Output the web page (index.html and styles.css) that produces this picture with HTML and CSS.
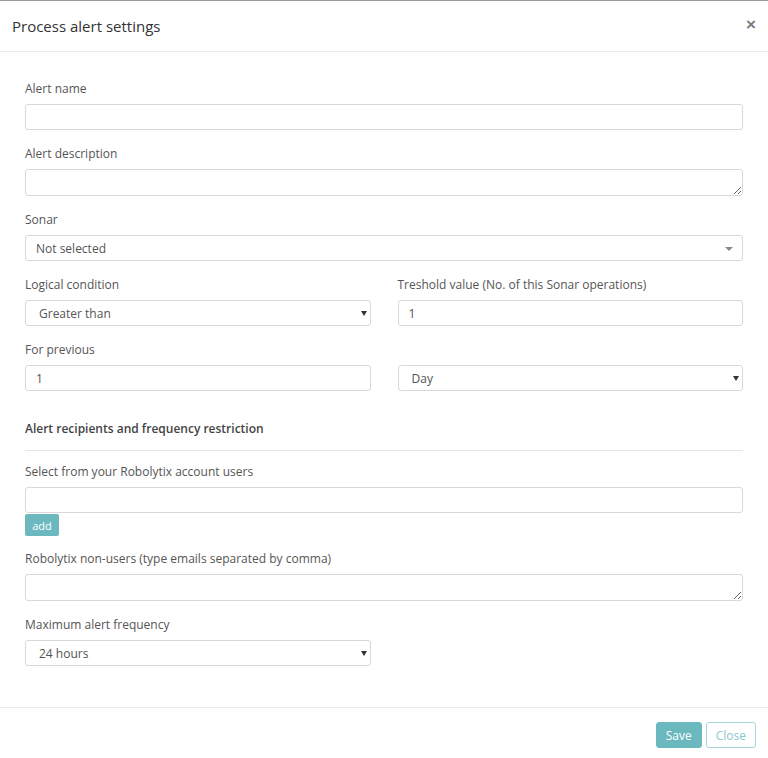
FILE: index.html
```html
<!DOCTYPE html>
<html lang="en">
<head>
  <meta charset="UTF-8">
  <title>Process alert settings</title>
  <link rel="stylesheet" href="styles.css">
</head>
<body>
<div class="modal">
  <div class="modal-header">
    <h4>Process alert settings</h4>
    <button class="btn-x">&times;</button>
  </div>

  <div class="modal-body">
    <div class="campo">
      <label for="alertName">Alert name</label>
      <input type="text" id="alertName">
    </div>

    <div class="campo">
      <label for="alertDesc">Alert description</label>
      <textarea id="alertDesc"></textarea>
    </div>

    <div class="campo">
      <label for="sonar">Sonar</label>
      <div class="select select-sonar">
        <select id="sonar">
          <option>Not selected</option>
        </select>
      </div>
    </div>

    <div class="fila">
      <div class="campo">
        <label for="condicion">Logical condition</label>
        <div class="select">
          <select id="condicion">
            <option>Greater than</option>
            <option>Less than</option>
          </select>
        </div>
      </div>
      <div class="campo">
        <label for="treshold">Treshold value (No. of this Sonar operations)</label>
        <input type="text" id="treshold" value="1">
      </div>
    </div>

    <div class="fila">
      <div class="campo">
        <label for="previous">For previous</label>
        <input type="text" id="previous" value="1">
      </div>
      <div class="campo">
        <label class="vacio">&nbsp;</label>
        <div class="select">
          <select id="periodo">
            <option>Day</option>
            <option>Week</option>
            <option>Month</option>
          </select>
        </div>
      </div>
    </div>

    <h5 class="seccion">Alert recipients and frequency restriction</h5>

    <div class="campo campo-add">
      <label for="usuarios">Select from your Robolytix account users</label>
      <input type="text" id="usuarios">
      <button class="btn-add">add</button>
    </div>

    <div class="campo">
      <label for="emails">Robolytix non-users (type emails separated by comma)</label>
      <textarea id="emails"></textarea>
    </div>

    <div class="fila">
      <div class="campo">
        <label for="frecuencia">Maximum alert frequency</label>
        <div class="select">
          <select id="frecuencia">
            <option>24 hours</option>
            <option>12 hours</option>
            <option>1 hour</option>
          </select>
        </div>
      </div>
    </div>
  </div>

  <div class="modal-footer">
    <button class="btn btn-save">Save</button>
    <button class="btn btn-close">Close</button>
  </div>
</div>
</body>
</html>
```

FILE: styles.css
```css
body {
  font-family: "Open Sans", Arial, sans-serif;
  margin: 0;
  padding: 0;
  background-color: #fff;
  color: #555;
}

.modal {
  border-top: 1px solid #9a9a9a;
  background: #fff;
}

.modal-header {
  height: 50px;
  padding: 0 12px;
  display: flex;
  align-items: center;
  justify-content: space-between;
  border-bottom: 1px solid #ebebeb;
}

.modal-header h4 {
  margin: 0;
  font-size: 15px;
  font-weight: 400;
  color: #333;
}

.btn-x {
  border: none;
  background: none;
  padding: 0;
  margin-top: -4px;
  font-family: Arial, sans-serif;
  font-size: 17px;
  font-weight: bold;
  line-height: 1;
  color: #7a7a7a;
  cursor: pointer;
}

.modal-body {
  padding: 27px 25px 27px;
}

.campo {
  margin-bottom: 14px;
}

.campo-add {
  margin-bottom: 13px;
}

.fila {
  display: grid;
  grid-template-columns: 1fr 1fr;
  gap: 27px;
}

label {
  display: block;
  font-size: 12px;
  line-height: 18px;
  padding-top: 1px;
  margin-bottom: 6px;
  color: #555;
}

input, textarea, select {
  display: block;
  width: 100%;
  height: 26px;
  box-sizing: border-box;
  border: 1px solid #d8d8d8;
  border-radius: 3px;
  padding: 0 10px;
  font-family: "Open Sans", Arial, sans-serif;
  font-size: 12px;
  color: #555;
  background: #fff;
  outline: none;
}

textarea {
  height: 27px;
  padding: 4px 10px;
  resize: vertical;
}

.select {
  position: relative;
}

.select select {
  appearance: none;
  -webkit-appearance: none;
  padding-left: 13px;
}

.select::after {
  content: "";
  position: absolute;
  right: 4px;
  top: 11px;
  border-left: 3px solid transparent;
  border-right: 3px solid transparent;
  border-top: 5px solid #333;
  pointer-events: none;
}

.select-sonar select {
  padding-left: 10px;
}

.select-sonar::after {
  right: 10px;
  top: 12px;
  border-left-width: 4px;
  border-right-width: 4px;
  border-top: 4px solid #888;
}

.seccion {
  margin: 15px 0 11px;
  padding-bottom: 12px;
  border-bottom: 1px solid #e5e5e5;
  font-size: 12px;
  line-height: 18px;
  font-weight: 600;
  color: #444;
}

.btn-add {
  display: block;
  margin-top: 1px;
  width: 34px;
  height: 22px;
  padding: 0;
  border: none;
  border-radius: 2px;
  background-color: #6cb8bf;
  color: #fff;
  font-family: "Open Sans", Arial, sans-serif;
  font-size: 11px;
  cursor: pointer;
}

.modal-footer {
  border-top: 1px solid #ebebeb;
  padding: 14px 12px 10px;
  display: flex;
  justify-content: flex-end;
  gap: 4px;
}

.btn {
  height: 26px;
  padding: 0 9px;
  border-radius: 3px;
  font-family: "Open Sans", Arial, sans-serif;
  font-size: 12px;
  cursor: pointer;
}

.btn-save {
  background-color: #6cb8bf;
  border: 1px solid #6cb8bf;
  color: #fff;
}

.btn-close {
  background-color: #fff;
  border: 1px solid #a6d6da;
  color: #8cc6cb;
}
```
